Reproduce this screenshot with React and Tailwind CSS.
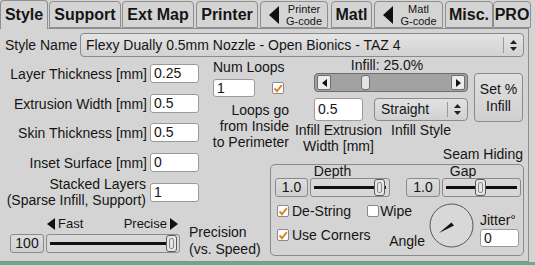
import React from 'react';

const tabs = [
  { label: 'Style', w: 'w-[48px]', ml: 'ml-0', active: true },
  { label: 'Support', w: 'w-[72px]', ml: 'ml-[1px]' },
  { label: 'Ext Map', w: 'w-[72px]', ml: 'ml-[1px]' },
  { label: 'Printer', w: 'w-[62px]', ml: 'ml-[2px]' },
  { label: 'Printer', sub: 'G-code', w: 'w-[68px]', ml: 'ml-[2px]', arrow: true },
  { label: 'Matl', w: 'w-[41px]', ml: 'ml-[3px]' },
  { label: 'Matl', sub: 'G-code', w: 'w-[69px]', ml: 'ml-[2px]', arrow: true },
  { label: 'Misc.', w: 'w-[48px]', ml: 'ml-[2px]' },
  { label: 'PRO', w: 'w-[38px]', ml: 'ml-0' },
];

function Tab({ tab }) {
  if (tab.active) {
    return (
      <div className={`${tab.w} ${tab.ml} relative z-10 -mb-px h-[29px] border border-b-0 border-[#8e8e8e] rounded-t-[4px] bg-[#d4d4d4] flex items-center justify-center text-[16px] font-bold`}>
        {tab.label}
      </div>
    );
  }
  if (tab.arrow) {
    return (
      <div className={`${tab.w} ${tab.ml} h-[27px] border border-[#8e8e8e] rounded-t-[4px] bg-[#d4d4d4] flex items-center pl-[8px]`}>
        <svg width="10" height="18" viewBox="0 0 10 18">
          <polygon points="10,0 10,18 0,9" fill="#111" />
        </svg>
        <div className="flex-1 flex flex-col items-center text-[11px] leading-[12px] pl-[2px]">
          <span>{tab.label}</span>
          <span>{tab.sub}</span>
        </div>
      </div>
    );
  }
  return (
    <div className={`${tab.w} ${tab.ml} h-[27px] border border-[#8e8e8e] rounded-t-[4px] bg-[#d4d4d4] flex items-center justify-center text-[16px] font-bold`}>
      {tab.label}
    </div>
  );
}

function UpDown() {
  return (
    <svg width="7" height="11" viewBox="0 0 7 11">
      <polygon points="0,4 3.5,0 7,4" fill="#222" />
      <polygon points="0,7 3.5,11 7,7" fill="#222" />
    </svg>
  );
}

function TextBox({ value, className = '' }) {
  return (
    <div className={`bg-white border border-[#9a9a9a] rounded-[3px] px-[3px] text-[14px] leading-[17px] flex items-center ${className}`}>
      {value}
    </div>
  );
}

function ValueBox({ value, className = '' }) {
  return (
    <div className={`h-[19px] border border-[#8a8a8a] rounded-[3px] bg-linear-to-b from-[#dedede] to-[#cecece] text-[14px] flex items-center justify-center ${className}`}>
      {value}
    </div>
  );
}

function Slider({ className = '', thumb }) {
  return (
    <div className={`relative h-[19px] border border-[#8a8a8a] rounded-[3px] bg-[#d8d8d8] flex items-center px-[3px] ${className}`}>
      <div className="flex-1 h-[3px] bg-[#111]" />
      <div className={`absolute top-0 ${thumb} w-[11px] h-[17px] rounded-[3px] border border-[#5a5a5a] bg-[#e6e6e6] flex items-center justify-center`}>
        <div className="w-[5px] h-[11px] rounded-[2px] border border-[#8a8a8a]" />
      </div>
    </div>
  );
}

function Check({ checked, className = '' }) {
  return (
    <div className={`w-[12px] h-[12px] rounded-[2px] border border-[#8a8a8a] bg-white flex items-center justify-center shrink-0 ${className}`}>
      {checked && (
        <svg width="10" height="9" viewBox="0 0 10 9">
          <path d="M1.5 4.5 L4 7.2 L8.8 1.2" fill="none" stroke="#d9852c" strokeWidth="2" />
        </svg>
      )}
    </div>
  );
}

function Row({ label, value, className = '' }) {
  return (
    <div className={`w-[199px] flex items-center justify-end gap-[3px] ${className}`}>
      <span className="text-[14px] leading-[16px] text-right whitespace-nowrap">{label}</span>
      <TextBox value={value} className="w-[49px] h-[19px]" />
    </div>
  );
}

function ScrollArrow({ dir }) {
  return (
    <div className="w-[14px] h-[15px] rounded-[2px] border border-[#6f6f6f] bg-[#ececec] flex items-center justify-center">
      <svg width="5" height="8" viewBox="0 0 5 8">
        {dir === 'left' ? <polygon points="5,0 5,8 0,4" fill="#111" /> : <polygon points="0,0 0,8 5,4" fill="#111" />}
      </svg>
    </div>
  );
}

export default function App() {
  return (
    <div className="w-[535px] h-[265px] bg-[#d4d4d4] font-['Liberation_Sans',Arial,sans-serif] text-[#151515] flex flex-col overflow-hidden">
      {/* Tabs */}
      <div className="h-[28px] flex items-end">
        {tabs.map((t, i) => <Tab key={i} tab={t} />)}
      </div>

      {/* Panel */}
      <div className="w-[529px] flex-1 border-t border-r border-b border-[#8e8e8e] flex flex-col">
        {/* Style name */}
        <div className="flex items-center mt-[4px] ml-[5px]">
          <span className="w-[75px] text-[14px]">Style Name</span>
          <div className="w-[444px] h-[24px] border border-[#8a8a8a] rounded-[4px] bg-linear-to-b from-[#e4e4e4] to-[#d2d2d2] flex items-center pl-[5px] text-[14px]">
            <span className="flex-1 whitespace-nowrap">Flexy Dually 0.5mm Nozzle - Open Bionics - TAZ 4</span>
            <div className="w-px h-[16px] bg-[#9a9a9a]" />
            <div className="w-[19px] flex justify-center"><UpDown /></div>
          </div>
        </div>

        <div className="flex flex-1">
          {/* Left column */}
          <div className="w-[205px] flex flex-col">
            <Row label="Layer Thickness [mm]" value="0.25" className="mt-[7px]" />
            <Row label="Extrusion Width [mm]" value="0.5" className="mt-[11px]" />
            <Row label="Skin Thickness [mm]" value="0.5" className="mt-[10px]" />
            <Row label="Inset  Surface [mm]" value="0" className="mt-[11px]" />
            <div className="w-[199px] flex items-center justify-end gap-[4px] mt-[4px]">
              <span className="text-[14px] leading-[16px] text-right whitespace-nowrap">Stacked Layers<br />(Sparse Infill, Support)</span>
              <TextBox value="1" className="w-[49px] h-[19px]" />
            </div>
            <div className="flex mt-[8px] w-[262px] shrink-0">
              <div className="flex flex-col pl-[10px]">
                <div className="h-[16px] flex justify-between items-center pl-[37px] pr-[2px] text-[13px] leading-[16px]">
                  <span className="flex items-center gap-[3px]">
                    <svg width="8" height="12" viewBox="0 0 8 12"><polygon points="8,0 8,12 0,6" fill="#111" /></svg>
                    Fast
                  </span>
                  <span className="flex items-center gap-[3px]">
                    Precise
                    <svg width="8" height="12" viewBox="0 0 8 12"><polygon points="0,0 0,12 8,6" fill="#111" /></svg>
                  </span>
                </div>
                <div className="flex gap-[2px] mt-[2px]">
                  <ValueBox value="100" className="w-[34px]" />
                  <Slider className="w-[134px]" thumb="left-[119px]" />
                </div>
              </div>
              <div className="ml-[9px] mt-[8px] text-[14px] leading-[17px] whitespace-nowrap">Precision<br />(vs. Speed)</div>
            </div>
          </div>

          {/* Right area */}
          <div className="flex-1 flex flex-col">
            <div className="flex">
              {/* Loops */}
              <div className="w-[86px] flex flex-col">
                <span className="mt-[2px] pl-[8px] text-[14px] leading-[16px] whitespace-nowrap">Num Loops</span>
                <div className="flex items-center mt-[4px] pl-[8px]">
                  <TextBox value="1" className="w-[42px] h-[18px]" />
                  <Check checked className="ml-[17px]" />
                </div>
                <div className="mt-[5px] pr-[2px] text-right text-[14px] leading-[16px] whitespace-nowrap">
                  Loops go<br />from Inside<br />to Perimeter
                </div>
              </div>

              {/* Infill */}
              <div className="ml-[23px] w-[209px] flex flex-col">
                <div className="flex">
                  <div className="w-[154px] flex flex-col">
                    <span className="text-center text-[14px] leading-[16px] pr-[8px]">Infill: 25.0%</span>
                    <div className="h-[19px] rounded-[4px] border border-[#6f6f6f] bg-[#a2a2a2] flex items-center px-[2px]">
                      <ScrollArrow dir="left" />
                      <div className="relative flex-1 h-[15px]">
                        <div className="absolute top-0 left-[30px] w-[9px] h-[15px] rounded-[3px] border border-[#6f6f6f] bg-[#e4e4e4]" />
                      </div>
                      <ScrollArrow dir="right" />
                    </div>
                    <div className="flex mt-[6px]">
                      <TextBox value="0.5" className="w-[49px] h-[23px]" />
                      <div className="ml-[11px] w-[94px] h-[23px] border border-[#8a8a8a] rounded-[4px] bg-linear-to-b from-[#e2e2e2] to-[#d0d0d0] flex items-center pl-[6px] text-[14px]">
                        <span className="flex-1">Straight</span>
                        <div className="w-px h-[15px] bg-[#9a9a9a]" />
                        <div className="w-[19px] flex justify-center"><UpDown /></div>
                      </div>
                    </div>
                  </div>
                  <div className="ml-[6px] mt-[16px] w-[49px] h-[49px] border border-[#8a8a8a] rounded-[4px] bg-linear-to-b from-[#e0e0e0] to-[#d0d0d0] flex flex-col items-center justify-center text-[14px] leading-[17px]">
                    <span>Set %</span>
                    <span>Infill</span>
                  </div>
                </div>
                <div className="w-[209px] flex items-start text-[14px] leading-[16px]">
                  <div className="w-[49px] shrink-0 flex justify-center">
                    <span className="text-center whitespace-nowrap">Infill Extrusion<br />Width [mm]</span>
                  </div>
                  <div className="ml-[11px] w-[94px] shrink-0 text-center whitespace-nowrap">Infill Style</div>
                  <div className="flex-1 min-w-0 mt-[24px] flex justify-end">
                    <span className="whitespace-nowrap">Seam Hiding</span>
                  </div>
                </div>
              </div>
            </div>

            {/* Seam hiding box */}
            <div className="ml-[65px] mt-[2px] w-[254px] h-[92px] border border-[#8a8a8a] rounded-[5px] flex flex-col">
              <div className="flex pl-[4px] h-[13px] text-[14px] leading-[13px]">
                <div className="w-[115px] text-center">Depth</div>
                <div className="ml-[16px] w-[114px] text-center">Gap</div>
              </div>
              <div className="flex pl-[4px]">
                <div className="flex gap-[2px]">
                  <ValueBox value="1.0" className="w-[33px]" />
                  <Slider className="w-[80px]" thumb="left-[63px]" />
                </div>
                <div className="flex gap-[2px] ml-[16px]">
                  <ValueBox value="1.0" className="w-[34px]" />
                  <Slider className="w-[79px]" thumb="left-[32px]" />
                </div>
              </div>
              <div className="flex mt-[6px] pl-[6px]">
                <div className="w-[148px] flex flex-col text-[14px] leading-[16px]">
                  <div className="flex items-center h-[16px]">
                    <Check checked />
                    <span className="ml-[3px]">De-String</span>
                    <Check className="ml-[16px]" />
                    <span className="ml-[1px]">Wipe</span>
                  </div>
                  <div className="flex items-start mt-[8px]">
                    <Check checked className="mt-[2px]" />
                    <span className="ml-[3px]">Use Corners</span>
                    <span className="ml-auto mt-[6px]">Angle</span>
                  </div>
                </div>
                <svg className="ml-[4px]" width="45" height="45" viewBox="0 0 45 45">
                  <circle cx="22.5" cy="22.5" r="21.5" fill="#d8d8d8" stroke="#555" strokeWidth="1" />
                  <polygon points="22.5,19.5 25,22.5 10,30" fill="#111" />
                </svg>
                <div className="ml-[6px] flex flex-col">
                  <span className="mt-[9px] text-[14px] leading-[16px] whitespace-nowrap">Jitter°</span>
                  <TextBox value="0" className="mt-[1px] w-[39px] h-[18px]" />
                </div>
              </div>
            </div>
          </div>
        </div>
      </div>
      <div className="h-[3px] bg-[#62ae8b]" />
    </div>
  );
}
